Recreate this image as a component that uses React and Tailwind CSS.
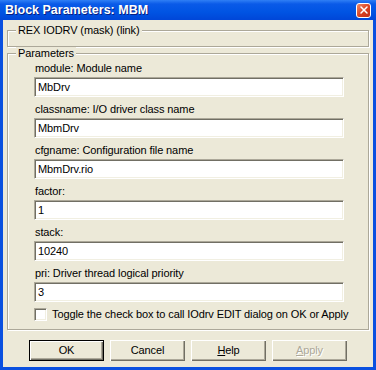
import { X } from "lucide-react";

const fields = [
    { label: "module: Module name", value: "MbDrv" },
    { label: "classname: I/O driver class name", value: "MbmDrv" },
    { label: "cfgname: Configuration file name", value: "MbmDrv.rio" },
    { label: "factor:", value: "1" },
    { label: "stack:", value: "10240" },
    { label: "pri: Driver thread logical priority", value: "3" },
];

// 클래식 3D 입력칸
function Field({ label, value }) {
    return (
        <div className="flex flex-col">
            <span className="h-[13px] leading-[13px] pl-[1px] mb-[2px]">{label}</span>
            <div className="h-[20px] w-[310px] bg-white border border-t-[#aca899] border-l-[#aca899] border-b-white border-r-white shadow-[inset_1px_1px_0_#716f64,inset_-1px_-1px_0_#f1efe2] pl-[3px] leading-[18px]">
                {value}
            </div>
        </div>
    );
}

function Button({ children, isDefault, disabled }) {
    const base = "w-[75px] h-[21px] flex items-center justify-center bg-[#ece9d8]";
    const edge = isDefault
        ? "border border-black shadow-[inset_1px_1px_0_#fff,inset_-1px_-1px_0_#716f64,inset_-2px_-2px_0_#aca899]"
        : "shadow-[inset_1px_1px_0_#fff,inset_-1px_-1px_0_#716f64,inset_-2px_-2px_0_#aca899]";
    return (
        <div className={`${base} ${edge} ${disabled ? "text-[#aca899] [text-shadow:1px_1px_0_#fff]" : ""}`}>
            {children}
        </div>
    );
}

function App() {
    return (
        <div className="w-[376px] h-[370px] flex flex-col bg-[#0a50e0] font-['Liberation_Sans',Arial,sans-serif] text-[11px] tracking-[-0.1px] text-black select-none">
            {/* 타이틀 바 */}
            <header className="h-[20px] shrink-0 flex items-center justify-between pl-[5px] pr-[5px] bg-[linear-gradient(#2f7ff5_0%,#0a5ae8_20%,#0054e3_60%,#0046d8_100%)]">
                <span className="text-white font-bold text-[12.5px] tracking-normal [text-shadow:1px_1px_0_#0a1e80]">Block Parameters: MBM</span>
                <div className="w-[15px] h-[15px] flex items-center justify-center rounded-[3px] border border-white bg-[linear-gradient(135deg,#f08a6a,#d9401f_55%,#c0301a)]">
                    <X size={12} strokeWidth={3} className="text-white" />
                </div>
            </header>

            <main className="flex-1 flex flex-col mx-[3px] mb-[3px] bg-[#ece9d8]">
                <fieldset className="mx-[4px] mt-[4px] h-[23px] border border-[#aca899] shadow-[inset_1px_1px_0_#fff,1px_1px_0_#fff]">
                    <legend className="ml-[8px] px-[2px] leading-[13px] bg-[#ece9d8]">REX IODRV (mask) (link)</legend>
                </fieldset>

                <fieldset className="mx-[4px] border border-[#aca899] shadow-[inset_1px_1px_0_#fff,1px_1px_0_#fff]">
                    <legend className="ml-[8px] px-[2px] leading-[13px] bg-[#ece9d8]">Parameters</legend>
                    <div className="flex flex-col gap-[6px] pl-[26px] pt-[2px] pb-[8px]">
                        {fields.map((f) => (
                            <Field key={f.label} label={f.label} value={f.value} />
                        ))}
                        <label className="flex items-center gap-[5px] h-[13px]">
                            <span className="w-[13px] h-[13px] bg-white border border-t-[#aca899] border-l-[#aca899] border-b-white border-r-white shadow-[inset_1px_1px_0_#716f64,inset_-1px_-1px_0_#f1efe2]"></span>
                            <span className="leading-[13px]">Toggle the check box to call IOdrv EDIT dialog on OK or Apply</span>
                        </label>
                    </div>
                </fieldset>

                <footer className="flex gap-[6px] pl-[26px] mt-[10px]">
                    <Button isDefault>OK</Button>
                    <Button>Cancel</Button>
                    <Button><span><u>H</u>elp</span></Button>
                    <Button disabled><span><u>A</u>pply</span></Button>
                </footer>
            </main>
        </div>
    );
}

export default App;
